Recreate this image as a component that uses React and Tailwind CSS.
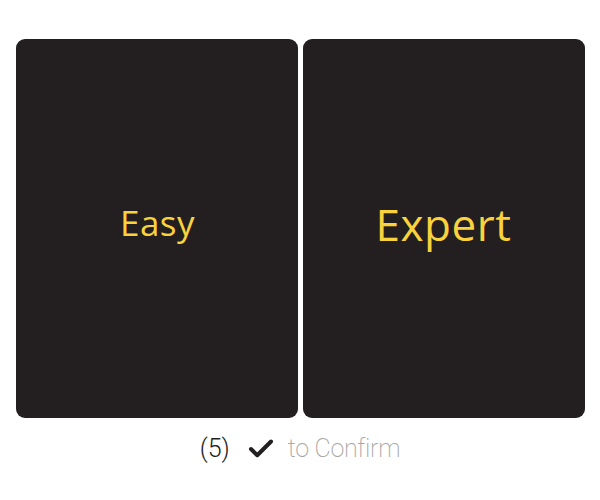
import { Check } from "lucide-react";

const App = () => {
  return (
    <div className="w-[600px] h-[500px] bg-white flex flex-col items-center">
      <div className="flex gap-[5px] pt-[39px] px-4">
        <div className="w-[282px] h-[379px] rounded-[9px] bg-[#231f20] flex items-center justify-center">
          <span className="text-[35px] text-[#f9d23c] tracking-[0.5px] pb-[10px] pl-[2px]" style={{ fontFamily: '"Open Sans", sans-serif' }}>
            Easy
          </span>
        </div>
        <div className="w-[282px] h-[379px] rounded-[9px] bg-[#231f20] flex items-center justify-center">
          <span className="text-[44px] text-[#f9d23c] tracking-[0.5px] pb-[10px]" style={{ fontFamily: '"Open Sans", sans-serif' }}>
            Expert
          </span>
        </div>
      </div>
      <div className="flex items-center mt-[12px] text-[25px] font-light" style={{ fontFamily: 'Roboto, sans-serif' }}>
        <span className="text-[#231f20]">(5)</span>
        <Check className="w-[30px] h-[30px] ml-[16px] text-[#231f20]" strokeWidth={3.2} />
        <span className="ml-[12px] text-[#a7a7a7] font-extralight tracking-[-0.3px]">to Confirm</span>
      </div>
    </div>
  );
};

export default App;
